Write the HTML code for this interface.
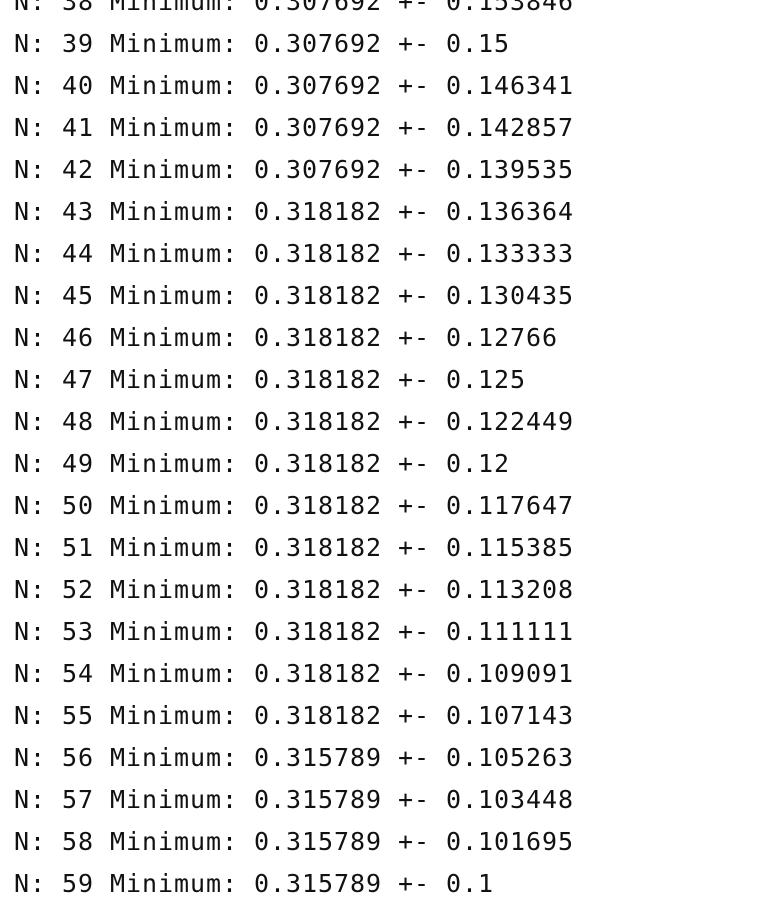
<!DOCTYPE html>
<html><head><style>
html,body{margin:0;padding:0;background:#fff;width:764px;height:902px;overflow:hidden}
pre{margin:0;position:absolute;left:14px;top:-19px;font-family:"DejaVu Sans Mono",monospace;font-size:25px;letter-spacing:0.95px;line-height:42px;color:#111}
</style></head><body><pre>N: 38 Minimum: 0.307692 +- 0.153846
N: 39 Minimum: 0.307692 +- 0.15
N: 40 Minimum: 0.307692 +- 0.146341
N: 41 Minimum: 0.307692 +- 0.142857
N: 42 Minimum: 0.307692 +- 0.139535
N: 43 Minimum: 0.318182 +- 0.136364
N: 44 Minimum: 0.318182 +- 0.133333
N: 45 Minimum: 0.318182 +- 0.130435
N: 46 Minimum: 0.318182 +- 0.12766
N: 47 Minimum: 0.318182 +- 0.125
N: 48 Minimum: 0.318182 +- 0.122449
N: 49 Minimum: 0.318182 +- 0.12
N: 50 Minimum: 0.318182 +- 0.117647
N: 51 Minimum: 0.318182 +- 0.115385
N: 52 Minimum: 0.318182 +- 0.113208
N: 53 Minimum: 0.318182 +- 0.111111
N: 54 Minimum: 0.318182 +- 0.109091
N: 55 Minimum: 0.318182 +- 0.107143
N: 56 Minimum: 0.315789 +- 0.105263
N: 57 Minimum: 0.315789 +- 0.103448
N: 58 Minimum: 0.315789 +- 0.101695
N: 59 Minimum: 0.315789 +- 0.1</pre></body></html>
